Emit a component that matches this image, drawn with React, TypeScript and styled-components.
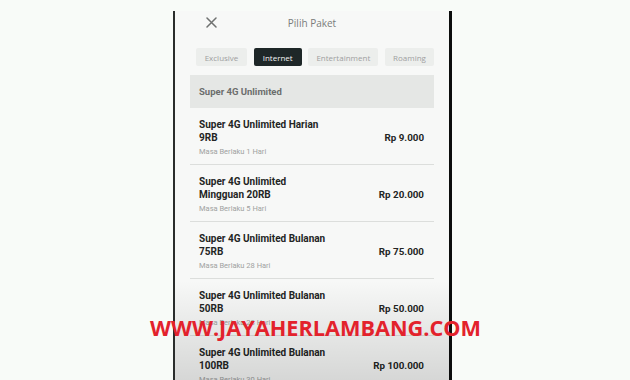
import * as React from 'react';
import styled, { createGlobalStyle } from 'styled-components';

const GlobalStyle = createGlobalStyle`
  html, body {
    margin: 0;
    padding: 0;
    background: #f8fbf8;
    overflow: hidden;
  }
  * { box-sizing: border-box; }
`;

const Page = styled.div`
  position: relative;
  width: 630px;
  height: 380px;
  padding: 11px 0 0 173px;
  font-family: Roboto, 'Noto Sans', sans-serif;
  overflow: hidden;
`;

const Phone = styled.div`
  position: relative;
  width: 279px;
  height: 380px;
  background: #f7f8f7;
  border-left: 2px solid #2a2d2c;
  border-right: 3px solid #0c0d0d;
  padding: 0 15px;

  &::after {
    content: '';
    position: absolute;
    left: 0;
    right: 0;
    bottom: 0;
    height: 110px;
    background: linear-gradient(to bottom, rgba(0, 0, 0, 0), rgba(0, 0, 0, 0.15));
    pointer-events: none;
  }
`;

const Header = styled.div`
  position: relative;
  height: 23px;
  display: flex;
  align-items: center;
  justify-content: center;
`;

const CloseButton = styled.div`
  position: absolute;
  left: 16px;
  top: 6px;
  width: 11px;
  height: 11px;
  display: flex;
`;

const Title = styled.div`
  font-family: 'Open Sans', sans-serif;
  font-size: 10px;
  color: #7a7c7b;
  font-weight: 500;
`;

const Tabs = styled.div`
  display: flex;
  justify-content: space-between;
  margin: 14px 0 0;
  padding: 0 0 0 6px;
`;

const Tab = styled.div<{ $active?: boolean; $w: number }>`
  width: ${(p) => p.$w}px;
  height: 18px;
  display: flex;
  align-items: center;
  justify-content: center;
  font-family: 'Open Sans', sans-serif;
  font-size: 8px;
  border-radius: 2px;
  color: ${(p) => (p.$active ? '#f2f4f3' : '#9ea09f')};
  background: ${(p) => (p.$active ? '#1e2728' : '#eceeec')};
`;

const SectionHead = styled.div`
  margin-top: 9px;
  height: 33px;
  display: flex;
  align-items: center;
  padding-left: 9px;
  background: #e5e7e5;
  color: #6c6e6d;
  font-size: 9.5px;
  font-weight: 700;
`;

const Item = styled.div`
  display: flex;
  align-items: center;
  justify-content: space-between;
  padding: 10px 10px 7px 9px;
  border-bottom: 1px solid #dcdedc;
`;

const ItemText = styled.div`
  display: flex;
  flex-direction: column;
`;

const ItemName = styled.div`
  font-size: 10px;
  line-height: 13px;
  font-weight: 700;
  color: #232524;
`;

const ItemNote = styled.div`
  margin-top: 3px;
  font-size: 7.5px;
  line-height: 10px;
  color: #a0a2a1;
`;

const Price = styled.div`
  font-size: 9.8px;
  font-weight: 700;
  color: #232524;
`;

const Watermark = styled.div`
  position: absolute;
  left: 0;
  right: 0;
  top: 317px;
  text-align: center;
  font-family: 'Open Sans', sans-serif;
  font-weight: 700;
  font-size: 21.7px;
  line-height: 22px;
  color: #e3222c;
  padding-left: 1px;
`;

const packages = [
  { name: ['Super 4G Unlimited Harian', '9RB'], days: 1, price: '9.000' },
  { name: ['Super 4G Unlimited', 'Mingguan 20RB'], days: 5, price: '20.000' },
  { name: ['Super 4G Unlimited Bulanan', '75RB'], days: 28, price: '75.000' },
  { name: ['Super 4G Unlimited Bulanan', '50RB'], days: 28, price: '50.000' },
  { name: ['Super 4G Unlimited Bulanan', '100RB'], days: 30, price: '100.000' },
];

const tabs = [
  { label: 'Exclusive', w: 51 },
  { label: 'Internet', w: 48, active: true },
  { label: 'Entertainment', w: 70 },
  { label: 'Roaming', w: 49 },
];

const App: React.FC = () => {
  return (
    <Page>
      <GlobalStyle />
      <Phone>
        <Header>
          <CloseButton>
            <svg width='11' height='11' viewBox='0 0 11 11'>
              <path d='M1 1L10 10M10 1L1 10' stroke='#6f7170' strokeWidth='1.5' strokeLinecap='round' />
            </svg>
          </CloseButton>
          <Title>Pilih Paket</Title>
        </Header>
        <Tabs>
          {tabs.map((t) => (
            <Tab key={t.label} $w={t.w} $active={t.active}>
              {t.label}
            </Tab>
          ))}
        </Tabs>
        <SectionHead>Super 4G Unlimited</SectionHead>
        {packages.map((p) => (
          <Item key={p.name.join(' ')}>
            <ItemText>
              <ItemName>
                {p.name[0]}
                <br />
                {p.name[1]}
              </ItemName>
              <ItemNote>Masa Berlaku {p.days} Hari</ItemNote>
            </ItemText>
            <Price>Rp {p.price}</Price>
          </Item>
        ))}
      </Phone>
      <Watermark>WWW.JAYAHERLAMBANG.COM</Watermark>
    </Page>
  );
};

export default App;
